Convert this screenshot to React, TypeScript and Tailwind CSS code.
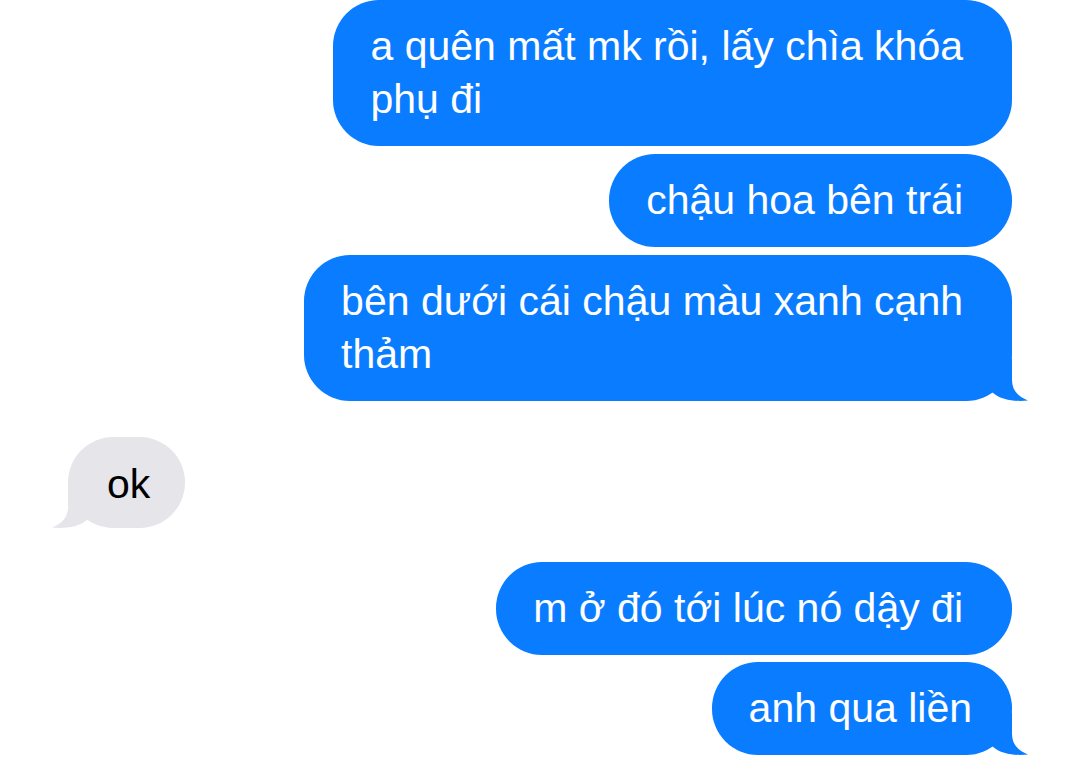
import React from "react";

const BLUE = "#0a7cff";
const GRAY = "#e5e5ea";

function TailRight() {
  return (
    <svg
      className="pointer-events-none absolute bottom-0 right-[-16px]"
      width="40"
      height="42"
      viewBox="0 0 40 42"
    >
      <path d="M24 0 L24 21 C24 31 30 38 40 41.5 C31 42.5 14 42.5 4 33 L4 0 Z" fill={BLUE} />
    </svg>
  );
}

function TailLeft() {
  return (
    <svg
      className="pointer-events-none absolute bottom-0 left-[-16px]"
      width="40"
      height="42"
      viewBox="0 0 40 42"
    >
      <path d="M16 0 L16 21 C16 31 10 38 0 41.5 C9 42.5 26 42.5 36 33 L36 0 Z" fill={GRAY} />
    </svg>
  );
}

function Sent({
  lines,
  tail,
  className = "",
  pad = "pr-[49px]",
}: {
  lines: string[];
  tail?: boolean;
  className?: string;
  pad?: string;
}) {
  return (
    <div
      className={`relative w-fit self-end rounded-[46px] bg-[#0a7cff] py-5 pl-[37px] text-[41px] leading-[53px] text-white ${pad} ${className}`}
    >
      {lines.map((l, i) => (
        <React.Fragment key={i}>
          {i > 0 && <br />}
          {l}
        </React.Fragment>
      ))}
      {tail && <TailRight />}
    </div>
  );
}

export default function App() {
  return (
    <div
      className="flex h-[761px] w-[1080px] flex-col overflow-hidden bg-white px-[68px]"
      style={{ fontFamily: '"Liberation Sans", Arial, sans-serif' }}
    >
      <Sent lines={["a quên mất mk rồi, lấy chìa khóa", "phụ đi"]} />
      <Sent className="mt-2" lines={["chậu hoa bên trái"]} />
      <Sent className="mt-2" lines={["bên dưới cái chậu màu xanh cạnh", "thảm"]} tail />

      <div className="relative mt-[36px] w-fit self-start rounded-[46px] bg-[#e5e5ea] pt-[21px] pb-[17px] pl-[39px] pr-[35px] text-[41px] leading-[53px] text-black">
        ok
        <TailLeft />
      </div>

      <Sent className="mt-[34px]" lines={["m ở đó tới lúc nó dậy đi"]} />
      <Sent className="mt-[7px]" pad="pr-[40px]" lines={["anh qua liền"]} tail />
    </div>
  );
}
